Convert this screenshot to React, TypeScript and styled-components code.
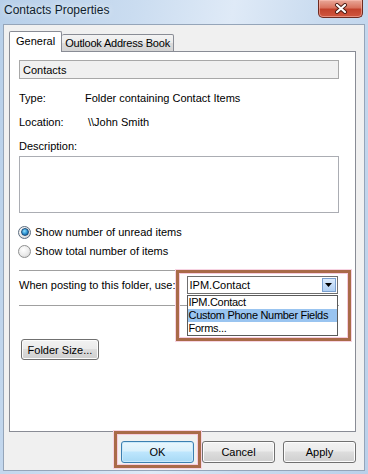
import styled, { createGlobalStyle } from "styled-components";

const GlobalStyle = createGlobalStyle`
  html, body {
    margin: 0;
    padding: 0;
  }
  body {
    width: 368px;
    height: 474px;
    overflow: hidden;
    font-family: "Liberation Sans", Arial, sans-serif;
    font-size: 11px;
    color: #000;
  }
`;

const Window = styled.div`
  width: 368px;
  height: 474px;
  display: flex;
  flex-direction: column;
  box-sizing: border-box;
  background: linear-gradient(100deg, #b7cfe9 0%, #cadcf0 30%, #dfeaf7 52%, #c9dbef 72%, #b9d0ea 100%);
`;

const TitleBar = styled.div`
  height: 24px;
  flex: none;
  display: flex;
  justify-content: space-between;
  align-items: flex-start;
  padding-left: 4px;
`;

const Title = styled.span`
  margin-top: 3px;
  font-size: 12px;
  line-height: 15px;
  color: #0f1e2e;
  text-shadow: 0 0 6px rgba(255, 255, 255, 0.9);
`;

const CloseButton = styled.div`
  width: 45px;
  height: 18px;
  margin-right: 5px;
  box-sizing: border-box;
  border: 1px solid #6e2a20;
  border-top: none;
  border-radius: 0 0 5px 5px;
  background: linear-gradient(to bottom, #e9a899 0%, #d9735f 45%, #c2422c 55%, #d0563e 100%);
  display: flex;
  align-items: center;
  justify-content: center;
  box-shadow: inset 0 0 0 1px rgba(255, 200, 190, 0.5);
`;

const Client = styled.div`
  flex: 1;
  margin: 0 3px 3px 3px;
  background: #f0f0f0;
  border: 1px solid #95a5b9;
  display: flex;
  flex-direction: column;
  padding: 7px 8px 0 5px;
`;

const TabStrip = styled.div`
  display: flex;
  align-items: flex-end;
  height: 20px;
  margin-bottom: -1px;
  position: relative;
  z-index: 1;
`;

const Tab = styled.div<{ $active?: boolean }>`
  box-sizing: border-box;
  height: ${(p) => (p.$active ? 21 : 18)}px;
  padding: 0 ${(p) => (p.$active ? 6 : 3)}px;
  border: 1px solid #898c95;
  border-bottom: ${(p) => (p.$active ? "none" : "1px solid #898c95")};
  border-left: ${(p) => (p.$active ? "1px solid #898c95" : "none")};
  border-radius: 2px 2px 0 0;
  background: ${(p) =>
    p.$active ? "#fff" : "linear-gradient(to bottom, #f3f3f3 0%, #ebebeb 50%, #dcdcdc 51%, #d4d4d4 100%)"};
  display: flex;
  align-items: center;
  line-height: 14px;
  letter-spacing: ${(p) => (p.$active ? 0 : -0.2)}px;
  padding-bottom: ${(p) => (p.$active ? 2 : 0)}px;
`;

const Panel = styled.div`
  height: 381px;
  box-sizing: border-box;
  background: #fff;
  border: 1px solid #898c95;
  padding: 8px 16px 0 9px;
  display: flex;
  flex-direction: column;
`;

const NameField = styled.div`
  height: 19px;
  box-sizing: border-box;
  border: 1px solid #a8a8a8;
  background: #f0f0f0;
  padding-left: 3px;
  display: flex;
  align-items: center;
`;

const InfoRow = styled.div<{ $top: number }>`
  height: 16px;
  margin-top: ${(p) => p.$top}px;
  display: flex;
  align-items: center;
`;

const Label = styled.span`
  width: 66px;
  flex: none;
`;

const Value = styled.span<{ $indent?: number }>`
  padding-left: ${(p) => p.$indent ?? 0}px;
`;

const DescBox = styled.div`
  height: 57px;
  margin-top: 2px;
  box-sizing: border-box;
  border: 1px solid #abadb3;
  background: #fff;
`;

const RadioRow = styled.label<{ $top: number }>`
  height: 16px;
  margin-top: ${(p) => p.$top}px;
  display: flex;
  align-items: center;
  gap: 4px;
  margin-left: -1px;
`;

const Radio = styled.span<{ $checked?: boolean }>`
  width: 13px;
  height: 13px;
  box-sizing: border-box;
  border-radius: 50%;
  border: 1px solid ${(p) => (p.$checked ? "#5c6d80" : "#8e8f8f")};
  background: radial-gradient(circle at 40% 35%, #ffffff 0%, #eaeaea 55%, #c9c9c9 100%);
  display: flex;
  align-items: center;
  justify-content: center;
  &::after {
    content: "";
    display: ${(p) => (p.$checked ? "block" : "none")};
    width: 6px;
    height: 6px;
    border-radius: 50%;
    background: radial-gradient(circle at 40% 35%, #8fe0ff 0%, #2a8fcf 55%, #0f4d83 100%);
    border: 0.5px solid #1b4d7a;
  }
`;

const Separator = styled.div<{ $top: number }>`
  height: 1px;
  margin-top: ${(p) => p.$top}px;
  background: #a0a0a0;
`;

const PostingRow = styled.div`
  height: 18px;
  margin-top: 5px;
  display: flex;
  align-items: center;
  gap: 11px;
`;

const ComboWrap = styled.div`
  position: relative;
  width: 151px;
  height: 18px;
`;

const Combo = styled.div`
  height: 18px;
  box-sizing: border-box;
  border: 1px solid #6f6f6f;
  background: #fff;
  display: flex;
  align-items: center;
  justify-content: space-between;
  padding: 1px 1px 1px 2px;
  font-size: 11px;
`;

const ArrowButton = styled.div`
  width: 14px;
  height: 14px;
  box-sizing: border-box;
  border: 1px solid #7aa0cf;
  background: linear-gradient(to bottom, #dcebfc 0%, #c4dcf7 50%, #b0cff3 100%);
  display: flex;
  align-items: center;
  justify-content: center;
`;

const DropList = styled.div`
  position: absolute;
  top: 19px;
  left: 0;
  width: 151px;
  height: 41px;
  box-sizing: border-box;
  border: 1px solid #5a5a5a;
  background: #fff;
  z-index: 2;
`;

const DropItem = styled.div<{ $selected?: boolean }>`
  height: 13px;
  line-height: 13px;
  padding-left: 1px;
  font-size: 11px;
  letter-spacing: -0.3px;
  background: ${(p) => (p.$selected ? "#99c4f0" : "transparent")};
`;

const Highlight = styled.div<{ $t: number; $l: number; $r: number; $b: number }>`
  position: absolute;
  top: ${(p) => p.$t}px;
  left: ${(p) => p.$l}px;
  right: ${(p) => p.$r}px;
  bottom: ${(p) => p.$b}px;
  border: 3px solid #a96a48;
  box-shadow: 0 0 0 1px #f7d3e2, inset 0 0 0 1px #f7cadc;
  pointer-events: none;
  z-index: 3;
`;

const Button = styled.button<{ $default?: boolean; $width: number }>`
  width: ${(p) => p.$width}px;
  height: 22px;
  box-sizing: border-box;
  border: 1px solid ${(p) => (p.$default ? "#3c7fb1" : "#707070")};
  border-radius: 3px;
  background: ${(p) =>
    p.$default
      ? "linear-gradient(to bottom, #eaf6fd 0%, #d9f0fc 45%, #bee6fd 50%, #a7d9f5 100%)"
      : "linear-gradient(to bottom, #f2f2f2 0%, #ebebeb 45%, #dddddd 50%, #cfcfcf 100%)"};
  box-shadow: inset 0 0 0 1px ${(p) => (p.$default ? "#c9e9fb" : "#fcfcfc")};
  font-family: "Liberation Sans", Arial, sans-serif;
  font-size: 11px;
  color: #000;
  padding: 0;
  display: flex;
  align-items: center;
  justify-content: center;
`;

const FolderSizeButton = styled(Button)`
  margin-top: 33px;
  height: 21px;
  margin-left: 2px;
`;

const Footer = styled.div`
  display: flex;
  justify-content: flex-end;
  gap: 8px;
  padding-top: 9px;
`;

const ButtonSlot = styled.div`
  position: relative;
`;

export default function App() {
  return (
    <>
      <GlobalStyle />
      <Window>
        <TitleBar>
          <Title>Contacts Properties</Title>
          <CloseButton>
            <svg width="14" height="11" viewBox="0 0 14 11">
              <path d="M3 2 L11 9 M11 2 L3 9" stroke="#4a1a12" strokeWidth="4" strokeLinecap="round" />
              <path d="M3 2 L11 9 M11 2 L3 9" stroke="#ffffff" strokeWidth="2.2" strokeLinecap="round" />
            </svg>
          </CloseButton>
        </TitleBar>
        <Client>
          <TabStrip>
            <Tab $active>General</Tab>
            <Tab>Outlook Address Book</Tab>
          </TabStrip>
          <Panel>
            <NameField>Contacts</NameField>
            <InfoRow $top={11}>
              <Label>Type:</Label>
              <Value>Folder containing Contact Items</Value>
            </InfoRow>
            <InfoRow $top={8}>
              <Label>Location:</Label>
              <Value $indent={3}>\\John Smith</Value>
            </InfoRow>
            <InfoRow $top={8}>Description:</InfoRow>
            <DescBox />
            <RadioRow $top={11}>
              <Radio $checked />
              Show number of unread items
            </RadioRow>
            <RadioRow $top={3}>
              <Radio />
              Show total number of items
            </RadioRow>
            <Separator $top={11} />
            <PostingRow>
              <span>When posting to this folder, use:</span>
              <ComboWrap>
                <Combo>
                  <span>IPM.Contact</span>
                  <ArrowButton>
                    <svg width="7" height="4" viewBox="0 0 7 4">
                      <path d="M0 0 H7 L3.5 4 Z" fill="#000" />
                    </svg>
                  </ArrowButton>
                </Combo>
                <DropList>
                  <DropItem>IPM.Contact</DropItem>
                  <DropItem $selected>Custom Phone Number Fields</DropItem>
                  <DropItem>Forms...</DropItem>
                </DropList>
                <Highlight $t={-6} $l={-11} $r={-13} $b={-47} />
              </ComboWrap>
            </PostingRow>
            <Separator $top={11} />
            <FolderSizeButton $width={78}>Folder Size...</FolderSizeButton>
          </Panel>
          <Footer>
            <ButtonSlot>
              <Button $default $width={73}>OK</Button>
              <Highlight $t={-10} $l={-7} $r={-7} $b={-5} />
            </ButtonSlot>
            <Button $width={73}>Cancel</Button>
            <Button $width={73}>Apply</Button>
          </Footer>
        </Client>
      </Window>
    </>
  );
}
